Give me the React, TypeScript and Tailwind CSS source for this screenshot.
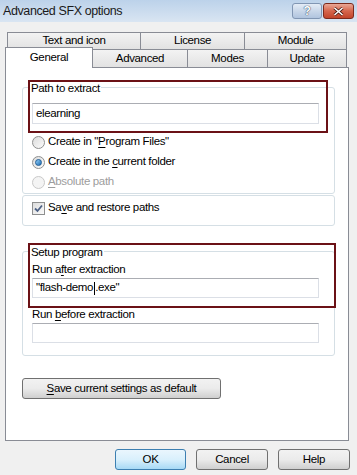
import React from "react";

function Radio({ checked, disabled }: { checked?: boolean; disabled?: boolean }) {
  return (
    <span
      className={`flex h-[13px] w-[13px] shrink-0 items-center justify-center rounded-full border ${
        disabled
          ? "border-[#c9c9c9] bg-[#f4f4f4]"
          : "border-[#8e8f8f] bg-gradient-to-br from-[#dcdcdc] to-[#fbfbfb]"
      }`}
    >
      {checked && (
        <span className="h-[7px] w-[7px] rounded-full border border-[#1f5d97] bg-gradient-to-br from-[#8fd0fa] to-[#1b6cb0]" />
      )}
    </span>
  );
}

function Checkbox() {
  return (
    <span className="flex h-[13px] w-[13px] shrink-0 items-center justify-center border border-[#8e8f8f] bg-gradient-to-br from-[#dcdcdc] to-[#fbfbfb]">
      <svg width="9" height="9" viewBox="0 0 9 9">
        <path d="M1 4.5 L3.5 7 L8 1.5" fill="none" stroke="#4d6185" strokeWidth="1.8" />
      </svg>
    </span>
  );
}

function Tab({ label, w, first }: { label: string; w: string; first?: boolean }) {
  return (
    <div
      className={`${w} flex h-full items-center justify-center border-t border-r border-[#898c95] bg-gradient-to-b from-[#f3f3f3] to-[#e2e2e2] ${
        first ? "border-l" : ""
      }`}
    >
      {label}
    </div>
  );
}

function TextBox({ children, h = "h-[21px]" }: { children?: React.ReactNode; h?: string }) {
  return (
    <div
      className={`${h} flex w-[287px] items-center border border-[#dbdfe6] border-t-[#abadb3] bg-white pl-[3px]`}
    >
      {children}
    </div>
  );
}

function Btn({ children, w, def }: { children: React.ReactNode; w: string; def?: boolean }) {
  return (
    <div
      className={`${w} flex h-[21px] items-center justify-center rounded-[3px] border ${
        def
          ? "border-[#3c7fb1] bg-gradient-to-b from-[#eaf6fd] via-[#d9f0fc] to-[#a7d9f5]"
          : "border-[#707070] bg-gradient-to-b from-[#f2f2f2] via-[#ebebeb] to-[#cfcfcf]"
      }`}
    >
      {children}
    </div>
  );
}

export default function App() {
  return (
    <div className="relative flex h-[475px] w-[357px] flex-col overflow-hidden bg-[#f0f0f0] font-['Liberation_Sans',Arial,sans-serif] text-[11.5px] tracking-[-0.35px] text-black">
      {/* Title bar */}
      <div className="flex h-[22px] items-center justify-between bg-gradient-to-b from-[#bcd2ea] to-[#d9e5f2] pl-[3px] pr-[3px]">
        <span className="text-[12.5px] tracking-[-0.4px] text-[#1a1a1a]">Advanced SFX options</span>
        <div className="flex items-center gap-[1px]">
          <div className="flex h-[16px] w-[30px] items-center justify-center rounded-[3px] border border-[#8196b3] bg-gradient-to-b from-[#e4ecf6] via-[#c9d7e9] to-[#b0c4de] text-[12px] font-bold text-white [text-shadow:0_0_1px_#2d3f5c,0_0_1px_#2d3f5c]">
            ?
          </div>
          <div className="flex h-[16px] w-[31px] items-center justify-center rounded-[3px] border border-[#7c2a1d] bg-gradient-to-b from-[#e9a797] via-[#d5654c] to-[#c2442a]">
            <svg width="11" height="9" viewBox="0 0 11 9">
              <path d="M1.5 1 L9.5 8 M9.5 1 L1.5 8" stroke="#4a1a12" strokeWidth="3" />
              <path d="M1.5 1 L9.5 8 M9.5 1 L1.5 8" stroke="#ffffff" strokeWidth="1.6" />
            </svg>
          </div>
        </div>
      </div>

      {/* Tabs row 1 */}
      <div className="mt-[10px] flex h-[17px] pl-[7px]">
        <Tab label="Text and icon" w="w-[134px]" first />
        <Tab label="License" w="w-[104px]" />
        <Tab label="Module" w="w-[102px]" />
      </div>
      {/* Tabs row 2 */}
      <div className="relative z-10 flex h-[18px] items-end pl-[5px]">
        <div className="relative -mb-px flex h-[21px] w-[88px] items-start justify-center border-x border-t border-[#898c95] bg-white pt-[1px]">
          General
        </div>
        <div className="flex h-full w-[95px] items-center justify-center border-t border-r border-[#898c95] bg-gradient-to-b from-[#f3f3f3] to-[#e2e2e2] pt-[1px]">
          Advanced
        </div>
        <div className="flex h-full w-[80px] items-center justify-center border-t border-r border-[#898c95] bg-gradient-to-b from-[#f3f3f3] to-[#e2e2e2] pt-[1px]">
          Modes
        </div>
        <div className="flex h-full w-[79px] items-center justify-center border-t border-r border-[#898c95] bg-gradient-to-b from-[#f3f3f3] to-[#e2e2e2] pt-[1px]">
          Update
        </div>
      </div>

      {/* Panel */}
      <div className="ml-[5px] flex h-[374px] w-[344px] flex-col border border-[#898c95] bg-white pl-[16px] pt-[19px]">
        {/* Group 1 */}
        <div className="relative flex h-[107px] w-[313px] flex-col rounded-[3px] border border-[#d5dfe5] pl-[9px] pt-[15px]">
          <span className="absolute -top-[8px] left-[7px] bg-white px-[1px] leading-[16px]">Path to extract</span>
          <TextBox>elearning</TextBox>
          <div className="mt-[8px] flex h-[20px] items-center gap-[3px]">
            <Radio />
            <span>
              Create in "<u className="underline-offset-2">P</u>rogram Files"
            </span>
          </div>
          <div className="flex h-[20px] items-center gap-[3px]">
            <Radio checked />
            <span>
              Create in the <u className="underline-offset-2">c</u>urrent folder
            </span>
          </div>
          <div className="flex h-[20px] items-center gap-[3px]">
            <Radio disabled />
            <span className="text-[#9d9d9d]">
              <u className="underline-offset-2">A</u>bsolute path
            </span>
          </div>
        </div>
        {/* Group 2 */}
        <div className="mt-[1px] flex h-[31px] w-[313px] rounded-[3px] border border-[#d5dfe5] pl-[9px] pt-[4px]">
          <div className="flex h-[16px] items-center gap-[3px]">
            <Checkbox />
            <span>
              Sa<u className="underline-offset-2">v</u>e and restore paths
            </span>
          </div>
        </div>
        {/* Group 3 */}
        <div className="relative mt-[25px] flex h-[105px] w-[313px] flex-col rounded-[3px] border border-[#d5dfe5] pl-[9px] pt-[10px]">
          <span className="absolute -top-[8px] left-[7px] bg-white px-[1px] leading-[16px]">Setup program</span>
          <div className="flex h-[16px] items-center">
            <span>
              Run a<u className="underline-offset-2">f</u>ter extraction
            </span>
          </div>
          <TextBox h="h-[20px]">
            <span>"flash-demo</span>
            <span className="mx-[0.5px] inline-block h-[13px] w-px bg-black" />
            <span>.exe"</span>
          </TextBox>
          <div className="mt-[9px] flex h-[16px] items-center">
            <span>
              Run <u className="underline-offset-2">b</u>efore extraction
            </span>
          </div>
          <TextBox h="h-[20px]" />
        </div>
        {/* Save button */}
        <div className="mt-[22px]">
          <Btn w="w-[199px]">
            <span>
              <u className="underline-offset-2">S</u>ave current settings as default
            </span>
          </Btn>
        </div>
      </div>

      {/* Bottom buttons */}
      <div className="mt-[8px] flex justify-end gap-[10px] pr-[7px]">
        <Btn w="w-[71px]" def>
          OK
        </Btn>
        <Btn w="w-[72px]">Cancel</Btn>
        <Btn w="w-[72px]">Help</Btn>
      </div>

      {/* Red annotation boxes */}
      <div className="pointer-events-none absolute left-[28px] top-[80px] h-[53px] w-[300px] border-2 border-[#6b1116]" />
      <div className="pointer-events-none absolute left-[28px] top-[243px] h-[65px] w-[308px] border-2 border-[#6b1116]" />
    </div>
  );
}
